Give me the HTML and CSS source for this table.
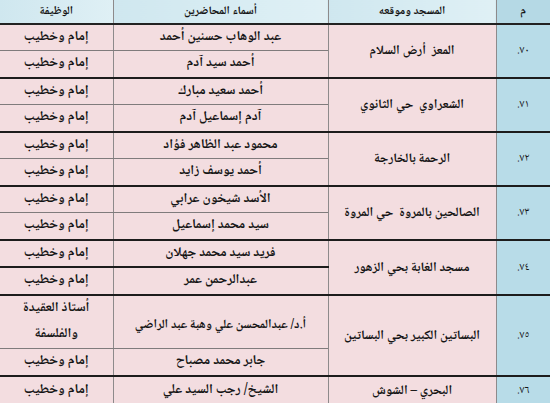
FILE: index.html
```html
<!DOCTYPE html>
<html lang="ar" dir="rtl">
<head>
<meta charset="utf-8">
<link rel="stylesheet" href="styles.css">
</head>
<body>
<table class="grid">
  <colgroup>
    <col class="c-num">
    <col class="c-mosque">
    <col class="c-names">
    <col class="c-job">
  </colgroup>
  <thead>
    <tr class="head">
      <th class="num">م</th>
      <th>المسجد وموقعه</th>
      <th>أسماء المحاضرين</th>
      <th>الوظيفة</th>
    </tr>
  </thead>
  <tbody>
    <tr class="sub">
      <td class="num" rowspan="2">٧٠.</td>
      <td class="mosque" rowspan="2">المعز &nbsp;أرض السلام</td>
      <td>عبد الوهاب حسنين أحمد</td>
      <td>إمام وخطيب</td>
    </tr>
    <tr class="sub end">
      <td>أحمد سيد آدم</td>
      <td>إمام وخطيب</td>
    </tr>

    <tr class="sub">
      <td class="num" rowspan="2">٧١.</td>
      <td class="mosque" rowspan="2">الشعراوي &nbsp;حي الثانوي</td>
      <td>أحمد سعيد مبارك</td>
      <td>إمام وخطيب</td>
    </tr>
    <tr class="sub end">
      <td>آدم إسماعيل آدم</td>
      <td>إمام وخطيب</td>
    </tr>

    <tr class="sub">
      <td class="num" rowspan="2">٧٢.</td>
      <td class="mosque" rowspan="2">الرحمة بالخارجة</td>
      <td>محمود عبد الظاهر فؤاد</td>
      <td>إمام وخطيب</td>
    </tr>
    <tr class="sub end">
      <td>أحمد يوسف زايد</td>
      <td>إمام وخطيب</td>
    </tr>

    <tr class="sub">
      <td class="num" rowspan="2">٧٣.</td>
      <td class="mosque" rowspan="2">الصالحين بالمروة &nbsp;حي المروة</td>
      <td>الأسد شيخون عرابي</td>
      <td>إمام وخطيب</td>
    </tr>
    <tr class="sub end">
      <td>سيد محمد إسماعيل</td>
      <td>إمام وخطيب</td>
    </tr>

    <tr class="sub dark">
      <td class="num" rowspan="2">٧٤.</td>
      <td class="mosque" rowspan="2">مسجد الغابة بحي الزهور</td>
      <td>فريد سيد محمد جهلان</td>
      <td>إمام وخطيب</td>
    </tr>
    <tr class="sub end">
      <td>عبدالرحمن عمر</td>
      <td>إمام وخطيب</td>
    </tr>

    <tr class="tall">
      <td class="num" rowspan="2">٧٥.</td>
      <td class="mosque" rowspan="2">البساتين الكبير بحي البساتين</td>
      <td class="lowered">أ.د/ عبدالمحسن علي وهبة عبد الراضي</td>
      <td class="two-line">أستاذ العقيدة<br>والفلسفة</td>
    </tr>
    <tr class="sub end">
      <td>جابر محمد مصباح</td>
      <td>إمام وخطيب</td>
    </tr>

    <tr class="last">
      <td class="num">٧٦.</td>
      <td class="mosque">البحري – الشوش</td>
      <td>الشيخ/ رجب السيد علي</td>
      <td>إمام وخطيب</td>
    </tr>
  </tbody>
</table>
</body>
</html>
```
FILE: styles.css
```css
html, body {
  margin: 0;
  padding: 0;
  background: #f3dde0;
  overflow: hidden;
}

.grid {
  width: 550px;
  border-collapse: collapse;
  table-layout: fixed;
  font-family: "Noto Naskh Arabic", "Noto Sans Arabic", "DejaVu Sans", sans-serif;
  font-weight: bold;
  color: #151515;
  direction: rtl;
}

.c-num { width: 54px; }
.c-mosque { width: 168px; }
.c-names { width: 215px; }
.c-job { width: 113px; }

.grid th,
.grid td {
  padding: 0;
  text-align: center;
  vertical-align: middle;
  line-height: 18px;
  border-left: 1px solid #8d8a8b;
  border-right: 1px solid #8d8a8b;
  background: #f3dde0;
  white-space: nowrap;
  overflow: hidden;
}

.grid tr > :first-child { border-right: none; }
.grid tr > :last-child { border-left: none; }

.head th {
  height: 23px;
  font-size: 11.5px;
  font-weight: 900;
  background: linear-gradient(to left, #dff0f5, #cfe7ef);
  border-bottom: 2px solid #222;
}

.head th.num {
  background: #b5d9e5;
}

.grid td {
  font-size: 13.5px;
}

.grid td.num {
  background: #b8dce8;
  font-size: 11px;
  font-weight: normal;
}

.grid td.mosque {
  font-size: 13px;
}

.sub td {
  height: 25px;
  border-bottom: 1px solid #7f7b7c;
}

.sub.end td {
  height: 26px;
  border-bottom: 2px solid #1c1c1c;
}

.sub td.num,
.sub td.mosque,
.tall td.num,
.tall td.mosque {
  border-bottom: 2px solid #1c1c1c;
}

.sub.dark td {
  border-bottom: 2px solid #1c1c1c;
}

.tall td {
  height: 44px;
  border-bottom: 1px solid #7f7b7c;
}

.two-line {
  line-height: 26px !important;
}

.lowered {
  font-size: 12.5px !important;
  padding-top: 8px !important;
}

.last td {
  height: 28px;
}
```
